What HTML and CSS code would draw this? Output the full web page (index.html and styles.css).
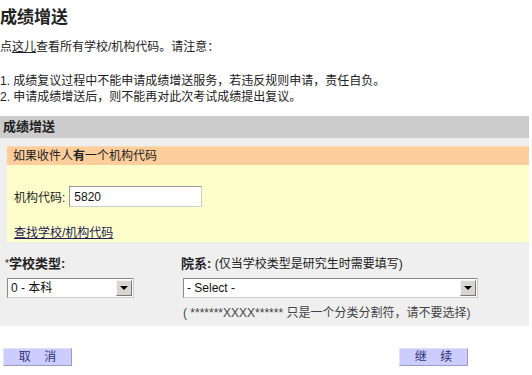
FILE: index.html
```html
<!DOCTYPE html>
<html lang="zh-cn">
<head>
    <meta charset="UTF-8">
    <meta name="viewport" content="width=device-width, initial-scale=1.0">
    <title>成绩增送</title>
    <link rel="stylesheet" href="styles.css">
</head>
<body>
    <div class="page">
        <h1>成绩增送</h1>
        <p class="intro">点<a href="#">这儿</a>查看所有学校/机构代码。请注意：</p>
        <ul class="notes">
            <li>1. 成绩复议过程中不能申请成绩增送服务，若违反规则申请，责任自负。</li>
            <li>2. 申请成绩增送后，则不能再对此次考试成绩提出复议。</li>
        </ul>

        <div class="panel">
            <div class="panel-title">成绩增送</div>
            <div class="panel-body">
                <div class="box">
                    <div class="box-head">如果收件人<b>有</b>一个机构代码</div>
                    <div class="box-body">
                        <div class="code-row">
                            <label for="code">机构代码:</label>
                            <input type="text" id="code" value="5820">
                        </div>
                        <a href="#" class="find-link">查找学校/机构代码</a>
                    </div>
                </div>

                <div class="form-row">
                    <div class="field field-type">
                        <div class="field-label"><span class="star">*</span><b>学校类型:</b></div>
                        <div class="select">
                            <select>
                                <option>0 - 本科</option>
                            </select>
                            <span class="select-btn">
                                <svg width="8" height="4" viewBox="0 0 8 4"><path d="M0 0h8L4 4z" fill="#000"/></svg>
                            </span>
                        </div>
                    </div>
                    <div class="field field-dept">
                        <div class="field-label"><b>院系:</b> (仅当学校类型是研究生时需要填写)</div>
                        <div class="select">
                            <select>
                                <option>- Select -</option>
                            </select>
                            <span class="select-btn">
                                <svg width="8" height="4" viewBox="0 0 8 4"><path d="M0 0h8L4 4z" fill="#000"/></svg>
                            </span>
                        </div>
                        <div class="hint">( *******XXXX****** 只是一个分类分割符，请不要选择)</div>
                    </div>
                </div>
            </div>
        </div>

        <div class="actions">
            <button type="button">取&nbsp;&nbsp;&nbsp;&nbsp;消</button>
            <button type="button">继&nbsp;&nbsp;&nbsp;&nbsp;续</button>
        </div>
    </div>
</body>
</html>
```

FILE: styles.css
```css
body {
    font-family: "Liberation Sans", "Noto Sans CJK SC", sans-serif;
    font-size: 12px;
    color: #222;
    margin: 0;
    padding: 0;
    background: #fff;
}

.page {
    width: 529px;
}

h1 {
    font-size: 17px;
    line-height: 20px;
    margin: 0;
    padding-top: 8px;
}

a {
    color: #222;
}

.intro {
    margin: 11px 0 0;
    line-height: 16px;
}

.notes {
    list-style: none;
    margin: 18px 0 0;
    padding: 0;
    line-height: 16px;
}

.panel {
    margin-top: 11px;
}

.panel-title {
    background-color: #cccccc;
    height: 22px;
    line-height: 22px;
    padding-left: 3px;
    font-size: 13px;
    font-weight: bold;
}

.panel-body {
    background-color: #efefef;
    padding-top: 8px;
}

.box {
    margin-left: 7px;
}

.box-head {
    background-color: #fdcd9b;
    height: 19px;
    line-height: 19px;
    padding-left: 6px;
    border-top: 1px solid #fed9b3;
    box-sizing: border-box;
}

.box-body {
    background-color: #ffffcc;
    padding: 21px 0 1px 7px;
}

.code-row {
    display: flex;
    align-items: center;
    gap: 4px;
}

.code-row input {
    width: 133px;
    height: 21px;
    box-sizing: border-box;
    border: 1px solid #999;
    border-right-color: #ccc;
    border-bottom-color: #ccc;
    padding: 0 4px;
    font-family: "Liberation Sans", "Noto Sans CJK SC", sans-serif;
    font-size: 12px;
    color: #111;
}

.find-link {
    display: inline-block;
    margin-top: 18px;
    line-height: 16px;
    color: #1a1a55;
}

.form-row {
    display: flex;
    padding: 14px 0 5px 7px;
}

.field-label {
    line-height: 16px;
    margin-left: -2px;
    font-size: 12px;
}

.field-label b {
    font-size: 13px;
}

.star {
    font-size: 10px;
    vertical-align: top;
}

.field-type {
    width: 127px;
}

.field-dept {
    margin-left: 49px;
    width: 295px;
}

.select {
    display: flex;
    align-items: center;
    height: 20px;
    box-sizing: border-box;
    margin-top: 6px;
    background: #fff;
    border: 1px solid #888;
    border-right-color: #ccc;
    border-bottom-color: #ccc;
    padding-right: 1px;
}

.select select {
    flex: 1;
    appearance: none;
    -webkit-appearance: none;
    border: none;
    background: transparent;
    font-family: "Liberation Sans", "Noto Sans CJK SC", sans-serif;
    font-size: 12px;
    color: #111;
    padding: 0 3px;
    height: 18px;
    outline: none;
}

.select-btn {
    width: 16px;
    height: 16px;
    box-sizing: border-box;
    background: #d8d6d0;
    border: 1px solid;
    border-color: #f4f4f4 #777 #777 #f4f4f4;
    display: flex;
    align-items: center;
    justify-content: center;
}

.hint {
    margin-top: 7px;
    line-height: 16px;
    color: #444;
}

.actions {
    display: flex;
    justify-content: space-between;
    padding: 22px 61px 0 3px;
}

.actions button {
    width: 69px;
    height: 18px;
    padding: 0;
    background-color: #ccccff;
    border: 1px solid #9999cc;
    border-top-color: #e0e0ff;
    border-left-color: #e0e0ff;
    color: #333377;
    font-family: "Liberation Sans", "Noto Sans CJK SC", sans-serif;
    font-size: 12px;
    line-height: 16px;
}
```
